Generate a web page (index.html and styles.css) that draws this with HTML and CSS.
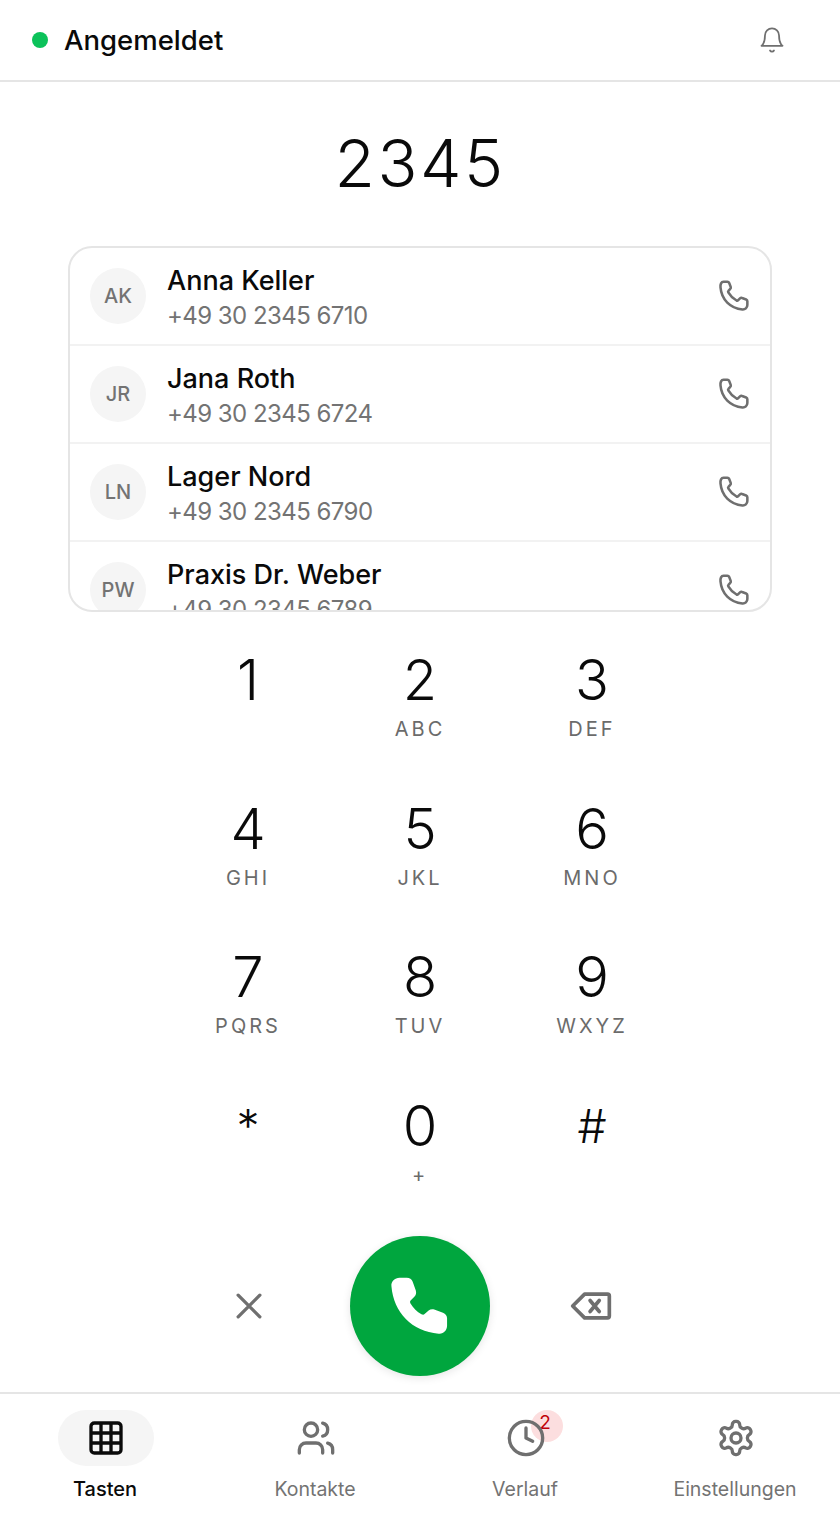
FILE: index.html
```html
<!DOCTYPE html>
<html lang="de">
<head>
<meta charset="utf-8">
<title>Telefon</title>
<link rel="stylesheet" href="styles.css">
</head>
<body>
<div class="app">
  <header class="top">
    <span class="dot"></span>
    <span class="status">Angemeldet</span>
    <svg class="bell" viewBox="0 0 24 24" fill="none" stroke="currentColor" stroke-width="1.5" stroke-linecap="round" stroke-linejoin="round"><path d="M6 8a6 6 0 0 1 12 0c0 7 3 9 3 9H3s3-2 3-9"/><path d="M10.3 21a1.94 1.94 0 0 0 3.4 0"/></svg>
  </header>
  <div class="number">2345</div>
  <div class="list">
    <div class="row"><span class="avatar">AK</span><div class="info"><div class="name">Anna Keller</div><div class="phone">+49 30 2345 6710</div></div><svg class="call" viewBox="0 0 24 24" fill="none" stroke="currentColor" stroke-width="1.7" stroke-linecap="round" stroke-linejoin="round"><path d="M5 2.500h2.600c.5 0 1 .3 1.200.8l1 2.600c.2.5.1 1-.3 1.400L8.300 8.600a.8.8 0 0 0-.1 1c1.300 2.300 3.200 4.100 5.500 5.400.4.2.8.1 1.100-.2l1.200-1.200c.4-.4.9-.5 1.400-.3l2.700 1c.5.2.8.7.8 1.200V18c0 1.800-1.500 3.200-3.300 3C9.500 20.300 3.700 14.500 3 6.300 2.800 4.200 3.500 2.500 5 2.500z"/></svg></div>
    <div class="row"><span class="avatar">JR</span><div class="info"><div class="name">Jana Roth</div><div class="phone">+49 30 2345 6724</div></div><svg class="call" viewBox="0 0 24 24" fill="none" stroke="currentColor" stroke-width="1.7" stroke-linecap="round" stroke-linejoin="round"><path d="M5 2.500h2.600c.5 0 1 .3 1.200.8l1 2.600c.2.5.1 1-.3 1.400L8.300 8.600a.8.8 0 0 0-.1 1c1.300 2.300 3.200 4.100 5.500 5.400.4.2.8.1 1.100-.2l1.200-1.200c.4-.4.9-.5 1.400-.3l2.700 1c.5.2.8.7.8 1.200V18c0 1.800-1.500 3.200-3.300 3C9.500 20.300 3.700 14.500 3 6.300 2.800 4.200 3.500 2.500 5 2.500z"/></svg></div>
    <div class="row"><span class="avatar">LN</span><div class="info"><div class="name">Lager Nord</div><div class="phone">+49 30 2345 6790</div></div><svg class="call" viewBox="0 0 24 24" fill="none" stroke="currentColor" stroke-width="1.7" stroke-linecap="round" stroke-linejoin="round"><path d="M5 2.500h2.600c.5 0 1 .3 1.200.8l1 2.600c.2.5.1 1-.3 1.400L8.300 8.600a.8.8 0 0 0-.1 1c1.300 2.300 3.200 4.100 5.500 5.400.4.2.8.1 1.100-.2l1.200-1.200c.4-.4.9-.5 1.400-.3l2.700 1c.5.2.8.7.8 1.200V18c0 1.800-1.500 3.200-3.300 3C9.500 20.300 3.700 14.500 3 6.300 2.800 4.200 3.500 2.500 5 2.500z"/></svg></div>
    <div class="row"><span class="avatar">PW</span><div class="info"><div class="name">Praxis Dr. Weber</div><div class="phone">+49 30 2345 6789</div></div><svg class="call" viewBox="0 0 24 24" fill="none" stroke="currentColor" stroke-width="1.7" stroke-linecap="round" stroke-linejoin="round"><path d="M5 2.500h2.600c.5 0 1 .3 1.200.8l1 2.600c.2.5.1 1-.3 1.400L8.300 8.600a.8.8 0 0 0-.1 1c1.300 2.300 3.200 4.100 5.500 5.400.4.2.8.1 1.100-.2l1.200-1.200c.4-.4.9-.5 1.400-.3l2.700 1c.5.2.8.7.8 1.200V18c0 1.800-1.500 3.200-3.300 3C9.500 20.300 3.700 14.500 3 6.300 2.800 4.200 3.500 2.500 5 2.500z"/></svg></div>
  </div>
  <div class="pad">
    <div class="key"><span class="digit">1</span><span class="letters"></span></div>
    <div class="key"><span class="digit">2</span><span class="letters">ABC</span></div>
    <div class="key"><span class="digit">3</span><span class="letters">DEF</span></div>
    <div class="key"><span class="digit">4</span><span class="letters">GHI</span></div>
    <div class="key"><span class="digit">5</span><span class="letters">JKL</span></div>
    <div class="key"><span class="digit">6</span><span class="letters">MNO</span></div>
    <div class="key"><span class="digit">7</span><span class="letters">PQRS</span></div>
    <div class="key"><span class="digit">8</span><span class="letters">TUV</span></div>
    <div class="key"><span class="digit">9</span><span class="letters">WXYZ</span></div>
    <div class="key"><span class="digit sym">*</span><span class="letters"></span></div>
    <div class="key"><span class="digit">0</span><span class="letters">+</span></div>
    <div class="key"><span class="digit sym">#</span><span class="letters"></span></div>
  </div>
  <div class="actions">
    <span class="act-box"><svg class="act" viewBox="0 0 24 24" fill="none" stroke="currentColor" stroke-width="2" stroke-linecap="round"><path d="M5.500 5.500l13 13M18.500 5.500l-13 13"/></svg></span>
    <div class="dial"><svg viewBox="0 0 24 24" fill="#fff"><path d="M5.300 2.800h2.300c.9 0 1.600.5 1.900 1.300l1 2.800c.2.700.1 1.400-.4 1.900L8.900 10c-.3.300-.3.700-.1 1 .9 1.500 2.100 2.700 3.500 3.500.4.200.8.200 1-.1l1.300-1.100c.5-.4 1.200-.5 1.800-.3l2.800 1c.8.300 1.300 1 1.300 1.800v2.400c0 1.500-1.200 2.700-2.700 2.500C9.300 19.900 3.400 14 2.700 5.500 2.500 4 3.800 2.800 5.300 2.800z"/></svg></div>
    <span class="act-box"><svg class="act-back" viewBox="0 0 24 24" fill="none" stroke="currentColor" stroke-width="2" stroke-linecap="round" stroke-linejoin="round"><path d="M21 5.500H8.500L2 12l6.500 6.500H21a1 1 0 0 0 1-1v-11a1 1 0 0 0-1-1z"/><path d="M16.500 9l-5 6M11.500 9l5 6"/></svg></span>
  </div>
  <nav class="nav">
    <div class="tab on"><span class="pill"><svg viewBox="0 0 24 24" fill="none" stroke="currentColor" stroke-width="2" stroke-linejoin="round"><rect x="3" y="3" width="18" height="18" rx="2"/><path d="M3 9h18M3 15h18M9 3v18M15 3v18"/></svg></span><span class="label">Tasten</span></div>
    <div class="tab"><span class="pill"><svg viewBox="0 0 24 24" fill="none" stroke="currentColor" stroke-width="2" stroke-linecap="round" stroke-linejoin="round"><path d="M16 21v-2a4 4 0 0 0-4-4H6a4 4 0 0 0-4 4v2"/><circle cx="9" cy="7" r="4"/><path d="M22 21v-2a4 4 0 0 0-3-3.870M16 3.130a4 4 0 0 1 0 7.750"/></svg></span><span class="label">Kontakte</span></div>
    <div class="tab"><span class="pill"><svg viewBox="0 0 24 24" fill="none" stroke="currentColor" stroke-width="2" stroke-linecap="round" stroke-linejoin="round"><circle cx="12" cy="12" r="10"/><path d="M12 6v6l4 2"/></svg><span class="badge">2</span></span><span class="label">Verlauf</span></div>
    <div class="tab"><span class="pill"><svg viewBox="0 0 24 24" fill="none" stroke="currentColor" stroke-width="2" stroke-linecap="round" stroke-linejoin="round"><path d="M12.220 2h-.44a2 2 0 0 0-2 2v.18a2 2 0 0 1-1 1.730l-.43.25a2 2 0 0 1-2 0l-.15-.08a2 2 0 0 0-2.730.730l-.22.380a2 2 0 0 0 .730 2.730l.15.100a2 2 0 0 1 1 1.720v.510a2 2 0 0 1-1 1.740l-.15.090a2 2 0 0 0-.730 2.730l.22.380a2 2 0 0 0 2.730.730l.15-.08a2 2 0 0 1 2 0l.43.250a2 2 0 0 1 1 1.730V20a2 2 0 0 0 2 2h.44a2 2 0 0 0 2-2v-.18a2 2 0 0 1 1-1.730l.43-.25a2 2 0 0 1 2 0l.15.080a2 2 0 0 0 2.730-.730l.22-.390a2 2 0 0 0-.730-2.730l-.15-.080a2 2 0 0 1-1-1.740v-.500a2 2 0 0 1 1-1.740l.15-.090a2 2 0 0 0 .730-2.730l-.22-.380a2 2 0 0 0-2.730-.730l-.15.080a2 2 0 0 1-2 0l-.43-.250a2 2 0 0 1-1-1.730V4a2 2 0 0 0-2-2z"/><circle cx="12" cy="12" r="3"/></svg></span><span class="label">Einstellungen</span></div>
  </nav>
</div>
</body>
</html>
```

FILE: styles.css
```css
* { box-sizing: border-box; }
html, body { margin: 0; padding: 0; background: #fff; }
body { font-family: Inter, "Liberation Sans", sans-serif; color: #0a0a0a; }
.app { width: 840px; height: 1520px; display: flex; flex-direction: column; overflow: hidden; }

.top { height: 82px; flex: none; display: flex; align-items: center; padding: 0 54px 0 32px; border-bottom: 2px solid #e5e5e5; }
.dot { width: 16px; height: 16px; border-radius: 50%; background: #0cc25a; margin-right: 16px; }
.status { font-size: 27.500px; font-weight: 500; flex: 1; }
.bell { width: 28px; height: 28px; color: #6f6f6f; }

.number { flex: none; height: 164px; padding-bottom: 2px; display: flex; align-items: center; justify-content: center; font-size: 66px; font-weight: 300; letter-spacing: 2.500px; }

.list { flex: none; margin: 0 68px; height: 366px; border: 2px solid #e5e5e5; border-radius: 24px; overflow: hidden; }
.row { height: 98px; display: flex; align-items: center; padding: 0 18px 0 20px; border-bottom: 2px solid #f2f2f2; }
.avatar { flex: none; width: 56px; height: 56px; border-radius: 50%; background: #f5f5f5; color: #737373; display: flex; align-items: center; justify-content: center; font-size: 20px; font-weight: 500; margin-right: 21px; }
.info { flex: 1; padding-top: 3px; }
.name { font-size: 27px; font-weight: 500; line-height: 35px; }
.phone { font-size: 24px; letter-spacing: -.55px; line-height: 35px; color: #737373; }
.call { flex: none; width: 36px; height: 36px; color: #6f6f6f; }

.pad { flex: none; width: 516px; margin: 10px auto 0 162px; display: grid; grid-template-columns: repeat(3, 172px); }
.key { height: 148.500px; display: flex; flex-direction: column; align-items: center; padding-top: 24px; }
.digit { font-size: 56px; font-weight: 300; line-height: 68px; }
.sym { font-size: 46px; }
.letters { font-size: 20px; font-weight: 400; letter-spacing: 3px; line-height: 24px; color: #6b6b6b; margin-top: 3px; }

.actions { flex: none; height: 140px; margin-top: 20px; display: flex; align-items: center; justify-content: center; gap: 79px; }
.act-box { width: 44px; height: 44px; display: flex; align-items: center; justify-content: center; color: #6f6f6f; }
.act { width: 40px; height: 40px; }
.act-back { width: 44px; height: 44px; }
.dial { width: 140px; height: 140px; border-radius: 50%; background: #00a63e; display: flex; align-items: center; justify-content: center; box-shadow: 0 2px 8px rgba(0,0,0,.1); }
.dial svg { width: 75px; height: 75px; }

.nav { flex: 1; margin-top: 16px; border-top: 2px solid #e5e5e5; display: grid; grid-template-columns: repeat(4, 210px); }
.tab { display: flex; flex-direction: column; align-items: center; padding-top: 16px; color: #737373; }
.tab.on { color: #0a0a0a; }
.pill { position: relative; width: 96px; height: 56px; margin-left: 2px; border-radius: 28px; display: flex; align-items: center; justify-content: center; }
.tab.on .pill { background: #f5f5f5; }
.pill svg { width: 40px; height: 40px; position: relative; z-index: 1; color: #6f6f6f; }
.tab.on svg { color: #0a0a0a; }
.badge { position: absolute; left: 53px; top: 0; width: 32px; height: 32px; border-radius: 50%; background: rgba(231,0,11,.13); color: #c10007; font-size: 19px; line-height: 26px; text-indent: -4px; text-align: center; }
.label { font-size: 19.500px; font-weight: 400; line-height: 24px; margin-top: 11px; }
.tab.on .label { font-size: 20px; font-weight: 500; }
```
